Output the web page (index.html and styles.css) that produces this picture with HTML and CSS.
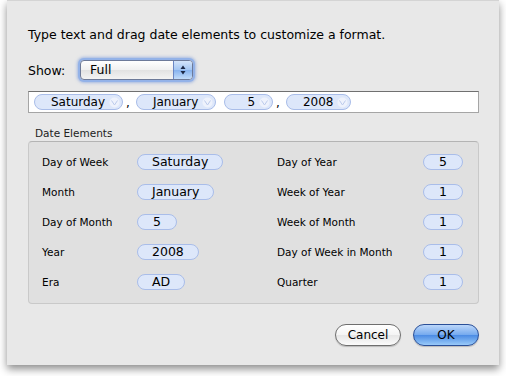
FILE: index.html
```html
<!DOCTYPE html>
<html lang="en">
  <head>
    <meta charset="UTF-8" />
    <title>Date Format</title>
    <link rel="stylesheet" href="styles.css">
  </head>
  <body>
    <div class="sheet">
      <p class="intro">Type text and drag date elements to customize a format.</p>

      <div class="show-row">
        <span class="show-label">Show:</span>
        <div class="popup">
          <span class="popup-value">Full</span>
          <span class="popup-arrows">
            <svg width="8" height="12" viewBox="0 0 8 12">
              <path d="M4 1.5 L6.5 5 L1.5 5 Z" fill="#1c2846" />
              <path d="M4 10.5 L6.5 7 L1.5 7 Z" fill="#1c2846" />
            </svg>
          </span>
        </div>
      </div>

      <!-- format token field -->
      <div class="token-field">
        <span class="token">Saturday<svg class="chev" width="11" height="11" viewBox="0 0 11 11"><circle cx="5.5" cy="5.5" r="5" fill="#eef2fc" /><path d="M2.5 3.5 L5.5 8 L8.5 3.5" fill="none" stroke="#bccbec" /></svg></span>
        <span class="sep">,</span>
        <span class="token">January<svg class="chev" width="11" height="11" viewBox="0 0 11 11"><circle cx="5.5" cy="5.5" r="5" fill="#eef2fc" /><path d="M2.5 3.5 L5.5 8 L8.5 3.5" fill="none" stroke="#bccbec" /></svg></span>
        <span class="token token-small">5<svg class="chev" width="11" height="11" viewBox="0 0 11 11"><circle cx="5.5" cy="5.5" r="5" fill="#eef2fc" /><path d="M2.5 3.5 L5.5 8 L8.5 3.5" fill="none" stroke="#bccbec" /></svg></span>
        <span class="sep">,</span>
        <span class="token">2008<svg class="chev" width="11" height="11" viewBox="0 0 11 11"><circle cx="5.5" cy="5.5" r="5" fill="#eef2fc" /><path d="M2.5 3.5 L5.5 8 L8.5 3.5" fill="none" stroke="#bccbec" /></svg></span>
      </div>

      <div class="group-title">Date Elements</div>
      <div class="group">
        <div class="row"><span class="label">Day of Week</span><span class="pill">Saturday</span></div>
        <div class="row row-right"><span class="label">Day of Year</span><span class="pill">5</span></div>
        <div class="row"><span class="label">Month</span><span class="pill">January</span></div>
        <div class="row row-right"><span class="label">Week of Year</span><span class="pill">1</span></div>
        <div class="row"><span class="label">Day of Month</span><span class="pill">5</span></div>
        <div class="row row-right"><span class="label">Week of Month</span><span class="pill">1</span></div>
        <div class="row"><span class="label">Year</span><span class="pill">2008</span></div>
        <div class="row row-right"><span class="label">Day of Week in Month</span><span class="pill">1</span></div>
        <div class="row"><span class="label">Era</span><span class="pill">AD</span></div>
        <div class="row row-right"><span class="label">Quarter</span><span class="pill">1</span></div>
      </div>

      <div class="buttons">
        <button class="btn">Cancel</button>
        <button class="btn btn-default">OK</button>
      </div>
    </div>
  </body>
</html>
```

FILE: styles.css
```css
body {
  margin: 0;
  min-height: 376px;
  background-color: #fff;
  font-family: "DejaVu Sans", sans-serif;
  font-size: 12px;
  color: #000;
}

.sheet {
  margin-left: 7px;
  width: 492px;
  height: 365px;
  box-sizing: border-box;
  background-color: #e8e8e8;
  border-top: 1px solid #d4d4d4;
  box-shadow: 0 4px 8px rgba(0, 0, 0, 0.45);
  padding: 0 20px 0 21px;
}

.intro {
  margin: 0;
  padding-top: 25px;
  height: 17px;
  line-height: 17px;
  font-size: 12.5px;
}

.show-row {
  display: flex;
  align-items: center;
  margin-top: 14px;
  height: 26px;
}

.show-label {
  width: 52px;
  font-size: 12.5px;
}

/* popup button with focus ring */
.popup {
  display: flex;
  width: 113px;
  height: 20px;
  box-sizing: border-box;
  border: 1px solid #6d7a99;
  border-radius: 4px;
  background: linear-gradient(#ffffff, #f0f0f0 50%, #e2e2e2 51%, #f3f3f3);
  box-shadow: 0 0 0 2px #93b2e8, 0 0 3px 3px rgba(99, 140, 220, 0.5);
  overflow: hidden;
}

.popup-value {
  flex: 1;
  padding-left: 9px;
  line-height: 18px;
  font-size: 12.5px;
}

.popup-arrows {
  width: 18px;
  display: flex;
  align-items: center;
  justify-content: center;
  border-left: 1px solid #6a86c4;
  background: linear-gradient(#d3e4fa, #a3c5f2 50%, #86b2ee 51%, #c2dcfa);
}

.token-field {
  display: flex;
  align-items: center;
  margin-top: 8px;
  height: 22px;
  box-sizing: border-box;
  border: 1px solid #a5a5a5;
  border-top-color: #707070;
  background-color: #fff;
  padding-left: 5px;
}

.token {
  display: flex;
  align-items: center;
  height: 16px;
  box-sizing: border-box;
  padding: 0 2px 0 16px;
  border: 1px solid #a9bde9;
  border-radius: 8px;
  background-color: #dde7fa;
  margin-right: 8px;
  line-height: 14px;
}

.token-small {
  padding-left: 22px;
}

.chev {
  margin-left: 4px;
}

.sep {
  margin: 2px 6px 0 -5px;
}

.group-title {
  margin-top: 13px;
  padding-left: 7px;
  font-size: 10.5px;
  line-height: 14px;
  color: #222;
}

.group {
  display: grid;
  grid-template-columns: 235px 1fr;
  margin-top: 1px;
  height: 163px;
  box-sizing: border-box;
  border: 1px solid #c9c9c9;
  border-top-color: #b4b4b4;
  border-radius: 4px;
  background-color: #e0e0e0;
  padding: 5px 15px 7px 13px;
}

.row {
  display: flex;
  align-items: center;
  height: 30px;
}

.row-right {
  justify-content: space-between;
}

.label {
  width: 95px;
  font-size: 10.5px;
}

.row-right .label {
  width: auto;
}

.pill {
  min-width: 40px;
  height: 16px;
  box-sizing: border-box;
  padding: 0 14px;
  text-align: center;
  border: 1px solid #a9bde9;
  border-radius: 8px;
  background-color: #dde7fa;
  line-height: 14px;
  font-size: 12.5px;
}

.buttons {
  display: flex;
  justify-content: flex-end;
  gap: 12px;
  margin-top: 20px;
}

.btn {
  width: 66px;
  height: 22px;
  border-radius: 11px;
  font-family: "DejaVu Sans", sans-serif;
  font-size: 12px;
  border: 1px solid #6e6e6e;
  background: linear-gradient(#ffffff, #f4f4f4 50%, #e6e6e6 51%, #fbfbfb);
  box-shadow: 0 1px 1px rgba(0, 0, 0, 0.2);
  padding: 0;
}

.btn-default {
  border-color: #2a4f98;
  background: linear-gradient(#bcd7fa, #74a9ee 50%, #4b8be4 51%, #99caf9);
}
```
